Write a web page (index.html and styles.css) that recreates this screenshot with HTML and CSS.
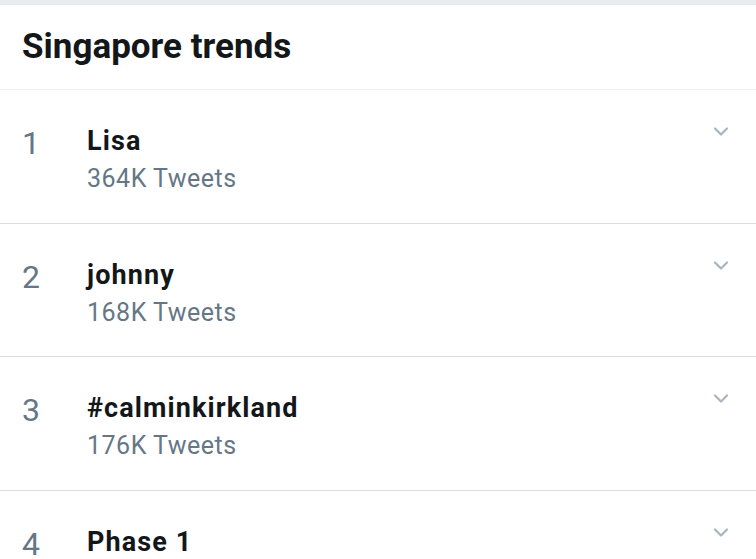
FILE: index.html
```html
<!DOCTYPE html>
<html>
<head>
<meta charset="utf-8">
<link rel="stylesheet" href="styles.css">
</head>
<body>
<div class="topbar"></div>
<div class="header"><h1 class="title">Singapore trends</h1></div>
<ul class="trends">
  <li class="trend">
    <span class="rank">1</span>
    <div class="info"><div class="name">Lisa</div><div class="count">364K Tweets</div></div>
    <svg class="chev" viewBox="0 0 16 12" width="16" height="12"><path d="M2 2.5 L8 8.5 L14 2.5" fill="none" stroke="#a8b5bf" stroke-width="2.2" stroke-linecap="round" stroke-linejoin="round"/></svg>
  </li>
  <li class="trend">
    <span class="rank">2</span>
    <div class="info"><div class="name">johnny</div><div class="count">168K Tweets</div></div>
    <svg class="chev" viewBox="0 0 16 12" width="16" height="12"><path d="M2 2.5 L8 8.5 L14 2.5" fill="none" stroke="#a8b5bf" stroke-width="2.2" stroke-linecap="round" stroke-linejoin="round"/></svg>
  </li>
  <li class="trend">
    <span class="rank">3</span>
    <div class="info"><div class="name">#calminkirkland</div><div class="count">176K Tweets</div></div>
    <svg class="chev" viewBox="0 0 16 12" width="16" height="12"><path d="M2 2.5 L8 8.5 L14 2.5" fill="none" stroke="#a8b5bf" stroke-width="2.2" stroke-linecap="round" stroke-linejoin="round"/></svg>
  </li>
  <li class="trend">
    <span class="rank">4</span>
    <div class="info"><div class="name">Phase 1</div><div class="count">120K Tweets</div></div>
    <svg class="chev" viewBox="0 0 16 12" width="16" height="12"><path d="M2 2.5 L8 8.5 L14 2.5" fill="none" stroke="#a8b5bf" stroke-width="2.2" stroke-linecap="round" stroke-linejoin="round"/></svg>
  </li>
</ul>
</body>
</html>
```
FILE: styles.css
```css
html, body {
  margin: 0;
  padding: 0;
  background: #ffffff;
  font-family: Roboto, "Liberation Sans", Arial, sans-serif;
  overflow: hidden;
}
.topbar {
  height: 5px;
  background: #e6ecf0;
}
.header {
  height: 84px;
  border-bottom: 1px solid #efefef;
  padding: 0 22px;
  display: flex;
  align-items: center;
}
.title {
  margin: 0;
  font-size: 35px;
  font-weight: 700;
  color: #14171a;
  line-height: 40px;
  letter-spacing: 0;
}
.trends {
  list-style: none;
  margin: 0;
  padding: 0;
}
.trend {
  display: flex;
  align-items: flex-start;
  height: 133.6px;
  box-sizing: border-box;
  border-bottom: 1px solid #dcdcdc;
  padding: 34px 27px 0 22px;
}
.rank {
  width: 65px;
  flex: none;
  font-size: 32px;
  line-height: 34px;
  color: #657786;
  margin-top: 2px;
}
.info {
  flex: 1;
}
.name {
  font-size: 27px;
  font-weight: 700;
  color: #14171a;
  line-height: 34px;
  letter-spacing: 1.1px;
}
.count {
  font-size: 25px;
  color: #657786;
  line-height: 36px;
  margin-top: 3px;
  letter-spacing: 0.5px;
}
.chev {
  flex: none;
  margin-top: 2px;
}
```
